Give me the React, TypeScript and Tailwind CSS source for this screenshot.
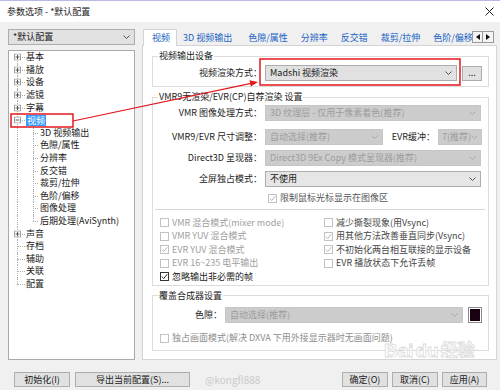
import React from 'react';

type Row = { label: string; level: 0 | 1; box?: 'plus' | 'minus'; sel?: boolean; first?: boolean; last?: boolean; lastChild?: boolean };

const tree: Row[] = [
  { label: '基本', level: 0, box: 'plus', first: true },
  { label: '播放', level: 0, box: 'plus' },
  { label: '设备', level: 0, box: 'plus' },
  { label: '滤镜', level: 0, box: 'plus' },
  { label: '字幕', level: 0, box: 'plus' },
  { label: '视频', level: 0, box: 'minus', sel: true },
  { label: '3D 视频输出', level: 1 },
  { label: '色隙/属性', level: 1 },
  { label: '分辨率', level: 1 },
  { label: '反交错', level: 1 },
  { label: '裁剪/拉伸', level: 1 },
  { label: '色阶/偏移', level: 1 },
  { label: '图像处理', level: 1 },
  { label: '后期处理(AviSynth)', level: 1, lastChild: true },
  { label: '声音', level: 0, box: 'plus' },
  { label: '存档', level: 0 },
  { label: '辅助', level: 0 },
  { label: '关联', level: 0 },
  { label: '配置', level: 0, last: true },
];

function Chevron({ c }: { c: string }) {
  return (
    <svg width="7" height="4" viewBox="0 0 7 4" className="shrink-0">
      <path d="M0.5 0.5 L3.5 3.5 L6.5 0.5" fill="none" stroke={c} strokeWidth="1" />
    </svg>
  );
}

function Combo({ text, disabled = false, className = '' }: { text: string; disabled?: boolean; className?: string }) {
  return (
    <div
      className={`h-[16px] shrink-0 flex items-center justify-between overflow-hidden border ${
        disabled ? 'bg-[#cccccc] border-[#c6c6c6] text-[#9c9c9c]' : 'bg-[#e1e1e1] border-[#adadad] text-[#1a1a1a]'
      } ${className}`}
    >
      <span className="whitespace-nowrap overflow-hidden">{text}</span>
      <Chevron c={disabled ? '#a9a9a9' : '#555555'} />
    </div>
  );
}

function Check({ label, checked = false, disabled = false, text = '' }: { label: string; checked?: boolean; disabled?: boolean; text?: string }) {
  return (
    <div className="h-[13.5px] flex items-center whitespace-nowrap">
      <span
        className={`w-[9px] h-[9px] shrink-0 border bg-white flex items-center justify-center ${
          disabled ? 'border-[#c2c2c2]' : 'border-[#333333]'
        }`}
      >
        {checked && (
          <svg width="7" height="7" viewBox="0 0 7 7">
            <path d="M0.8 3.6 L2.7 5.5 L6.3 1.2" fill="none" stroke={disabled ? '#b4b4b4' : '#222222'} strokeWidth="1" />
          </svg>
        )}
      </span>
      <span className={`ml-[3px] ${text}`}>{label}</span>
    </div>
  );
}

function TreeRow({ r }: { r: Row }) {
  const dot = 'border-dotted border-[#b0b0b0]';
  return (
    <div className="h-[12.6px] flex items-center whitespace-nowrap">
      <div className="relative w-[17px] h-full shrink-0">
        <div className={`absolute left-[8px] border-l ${dot} ${r.first ? 'top-1/2 bottom-0' : r.last ? 'top-0 bottom-1/2' : 'top-0 bottom-0'}`} />
        {r.level === 0 && <div className={`absolute left-[8px] top-1/2 w-[8px] border-t ${dot}`} />}
        {r.box && (
          <svg width="7" height="7" viewBox="0 0 7 7" className="absolute left-[5px] top-1/2 -translate-y-1/2">
            <rect x="0.5" y="0.5" width="6" height="6" fill="#ffffff" stroke="#a0a0a0" />
            <path d="M1.5 3.5 H5.5" stroke="#555555" />
            {r.box === 'plus' && <path d="M3.5 1.5 V5.5" stroke="#555555" />}
          </svg>
        )}
      </div>
      {r.level === 1 && (
        <div className="relative w-[14px] h-full shrink-0">
          <div className={`absolute left-[7px] border-l ${dot} ${r.lastChild ? 'top-0 bottom-1/2' : 'top-0 bottom-0'}`} />
          <div className={`absolute left-[7px] top-1/2 w-[5px] border-t ${dot}`} />
        </div>
      )}
      <span className={r.sel ? 'bg-[#3399ff] text-white px-[1px] leading-[11px]' : ''}>{r.label}</span>
    </div>
  );
}

function Btn({ label, className = '' }: { label: string; className?: string }) {
  return (
    <div className={`h-[15px] shrink-0 border border-[#adadad] bg-[#e1e1e1] flex items-center justify-center whitespace-nowrap ${className}`}>
      {label}
    </div>
  );
}

export default function App() {
  return (
    <div className="relative w-[500px] h-[390px] overflow-hidden bg-[#f0f0f0] flex flex-col font-['Noto_Sans_CJK_SC',sans-serif] text-[9px] leading-[12px] text-[#1a1a1a]">
      {/* title bar */}
      <div className="h-[22px] shrink-0 bg-white border-t border-[#b9b9e8] flex items-center justify-between pl-[7px] pr-[6px]">
        <span>参数选项 - *默认配置</span>
        <svg width="9" height="9" viewBox="0 0 9 9">
          <path d="M0.5 0.5 L8.5 8.5 M8.5 0.5 L0.5 8.5" stroke="#222222" strokeWidth="1" />
        </svg>
      </div>

      {/* body */}
      <div className="flex flex-1 min-h-0 pl-[8px] pr-[3px] pb-[5px]">
        {/* left column */}
        <div className="w-[127px] shrink-0 flex flex-col pt-[7px]">
          <Combo text="*默认配置" className="w-full px-[4px]" />
          <div className="mt-[5px] flex-1 bg-white border border-[#a9a9a9] pt-0">
            {tree.map((r) => (
              <TreeRow key={r.label} r={r} />
            ))}
          </div>
        </div>

        {/* right column */}
        <div className="ml-[7px] flex-1 min-w-0 flex flex-col pt-[5px]">
          {/* tabs */}
          <div className="h-[18px] shrink-0 flex items-end text-[#1a63c4]">
            <div className="relative z-10 ml-[1px] h-[17px] -mb-px pl-[8px] pr-[6px] bg-white border-x border-t border-[#d4d4d4] flex items-center">
              视频
            </div>
            <div className="flex-1 min-w-0 h-[15px] overflow-hidden flex items-center gap-[13px] pl-[6px] whitespace-nowrap">
              <span>3D 视频输出</span>
              <span className="ml-[3px]">色隙/属性</span>
              <span>分辨率</span>
              <span>反交错</span>
              <span>裁剪/拉伸</span>
              <span>色阶/偏移</span>
            </div>
            <div className="self-start mt-[4px] mr-[3px] flex">
              <div className="w-[11px] h-[12px] border border-[#9a9a9a] bg-[#f4f4f4] flex items-center justify-center">
                <svg width="4" height="6" viewBox="0 0 4 6"><path d="M4 0 L0 3 L4 6 Z" fill="#111111" /></svg>
              </div>
              <div className="w-[11px] h-[12px] border border-l-0 border-[#9a9a9a] bg-[#f4f4f4] flex items-center justify-center">
                <svg width="4" height="6" viewBox="0 0 4 6"><path d="M0 0 L4 3 L0 6 Z" fill="#111111" /></svg>
              </div>
            </div>
          </div>

          {/* panel */}
          <div className="flex-1 min-h-0 border border-[#d4d4d4] bg-white pl-[9px] pr-[7px] flex flex-col">
            {/* group 1 */}
            <fieldset className="mt-[4px] border border-[#dcdcdc] pr-[6px] pb-[5px]">
              <legend className="ml-[5px] px-[1px] leading-[12px]">视频输出设备</legend>
              <div className="pt-[3px] flex items-center">
                <span className="w-[109px] shrink-0 text-right">视频渲染方式：</span>
                <Combo text="Madshi 视频渲染" className="ml-[3px] w-[192px] px-[4px]" />
                <Btn label="..." className="ml-[5px] w-[20px] h-[15px]" />
              </div>
            </fieldset>

            {/* group 2 */}
            <fieldset className="mt-[4px] border border-[#dcdcdc] pr-[6px] pb-[1px]">
              <legend className="ml-[5px] px-[1px] leading-[12px]">VMR9无渲染/EVR(CP)自荐渲染 设置</legend>
              <div className="pt-[2px] flex items-center">
                <span className="w-[109px] shrink-0 text-right">VMR 图像处理方式：</span>
                <Combo text="3D 纹理层 - 仅用于像素着色(推荐)" disabled className="ml-[3px] w-[216px] px-[4px]" />
              </div>
              <div className="mt-[8px] flex items-center">
                <span className="w-[109px] shrink-0 text-right">VMR9/EVR 尺寸调整：</span>
                <Combo text="自动选择(推荐)" disabled className="ml-[3px] w-[118px] px-[4px]" />
                <span className="flex-1 text-right whitespace-nowrap">EVR缓冲：</span>
                <Combo text="7(推荐)" disabled className="ml-[3px] w-[44px] pl-[3px] pr-[3px]" />
              </div>
              <div className="mt-[5px] flex items-center">
                <span className="w-[109px] shrink-0 text-right">Direct3D 呈现器：</span>
                <Combo text="Direct3D 9Ex Copy 模式呈现器(推荐)" disabled className="ml-[3px] w-[216px] px-[4px]" />
              </div>
              <div className="mt-[5px] flex items-center">
                <span className="w-[109px] shrink-0 text-right">全屏独占模式：</span>
                <Combo text="不使用" className="ml-[3px] w-[216px] px-[4px] !bg-[#e6e6e6]" />
              </div>
              <div className="mt-[5px] h-[12px] pl-[115px] flex items-center">
                <Check label="限制鼠标光标显示在图像区" checked disabled text="text-[#555555]" />
              </div>
              <div className="mt-[5px] ml-[2px] -mr-[3px] border-t border-[#d6d6d6]" />
              <div className="mt-[6px] pl-[7px] grid grid-cols-[164px_1fr]">
                <div className="flex flex-col">
                  <Check label="VMR 混合模式(mixer mode)" disabled text="text-[#9e9e9e]" />
                  <Check label="VMR YUV 混合模式" disabled text="text-[#9e9e9e]" />
                  <Check label="EVR YUV 混合模式" checked disabled text="text-[#9e9e9e]" />
                  <Check label="EVR 16~235 电平输出" disabled text="text-[#9e9e9e]" />
                  <Check label="忽略输出非必需的帧" checked text="text-[#1a1a1a]" />
                </div>
                <div className="flex flex-col">
                  <Check label="减少撕裂现象(用Vsync)" disabled text="text-[#444444]" />
                  <Check label="用其他方法改善垂直同步(Vsync)" checked disabled text="text-[#444444]" />
                  <Check label="不初始化两台相互联接的显示设备" checked disabled text="text-[#444444]" />
                  <Check label="EVR 播放状态下允许丢帧" disabled text="text-[#444444]" />
                </div>
              </div>
            </fieldset>

            {/* group 3 */}
            <fieldset className="mt-[4px] border border-[#dcdcdc] pr-[5px] pb-[5px]">
              <legend className="ml-[5px] px-[1px] leading-[12px]">覆盖合成器设置</legend>
              <div className="pt-[5px] flex items-center">
                <span className="w-[69px] shrink-0 text-right">色隙：</span>
                <Combo text="自动选择(推荐)" disabled className="ml-[3px] w-[238px] px-[4px]" />
                <div className="ml-[5px] w-[14px] h-[16px] shrink-0 border border-[#8a8a8a] bg-white p-[1px]">
                  <div className="w-full h-full bg-[#1a0010]" />
                </div>
              </div>
              <div className="mt-[9px] pl-[7px]">
                <Check label="独占画面模式(解决 DXVA 下用外接显示器时无画面问题)" disabled text="text-[#8e8e8e]" />
              </div>
            </fieldset>
          </div>
        </div>
      </div>

      {/* bottom buttons */}
      <div className="h-[25px] shrink-0 flex items-start pt-[7px] pl-[14px] pr-[13px]">
        <Btn label="初始化(I)" className="w-[56px]" />
        <Btn label="导出当前配置(S)..." className="ml-[5px] w-[115px]" />
        <span className="ml-[15px] mt-[2px] text-[#cacaca] text-[10px] leading-[12px]">@kongfl888</span>
        <Btn label="确定(O)" className="ml-auto w-[46px]" />
        <Btn label="取消(C)" className="ml-[4px] w-[46px]" />
        <Btn label="应用(A)" className="ml-[4px] w-[45px]" />
      </div>

      {/* baidu watermark */}
      <div className="absolute left-[384px] top-[341px] pointer-events-none flex items-end text-[19px] leading-[20px] font-bold text-white [-webkit-text-stroke:0.8px_#dadada] font-['Liberation_Sans','Noto_Sans_CJK_SC',sans-serif]">
        <span>Bai</span>
        <span className="ml-[2px]">du</span>
        <span className="ml-[2px] text-[17px]">经验</span>
      </div>

      {/* red annotations */}
      <svg className="absolute left-0 top-0 pointer-events-none" width="500" height="390" viewBox="0 0 500 390">
        <rect x="11" y="114" width="62" height="13" fill="none" stroke="#e3171d" strokeWidth="1.5" />
        <rect x="260" y="59" width="200" height="26" fill="none" stroke="#e3171d" strokeWidth="1.5" />
        <line x1="73" y1="121" x2="251" y2="83.3" stroke="#e3171d" strokeWidth="1.2" />
        <polygon points="258,82 250.8,86.4 249.5,80.3" fill="#e3171d" />
      </svg>
    </div>
  );
}
